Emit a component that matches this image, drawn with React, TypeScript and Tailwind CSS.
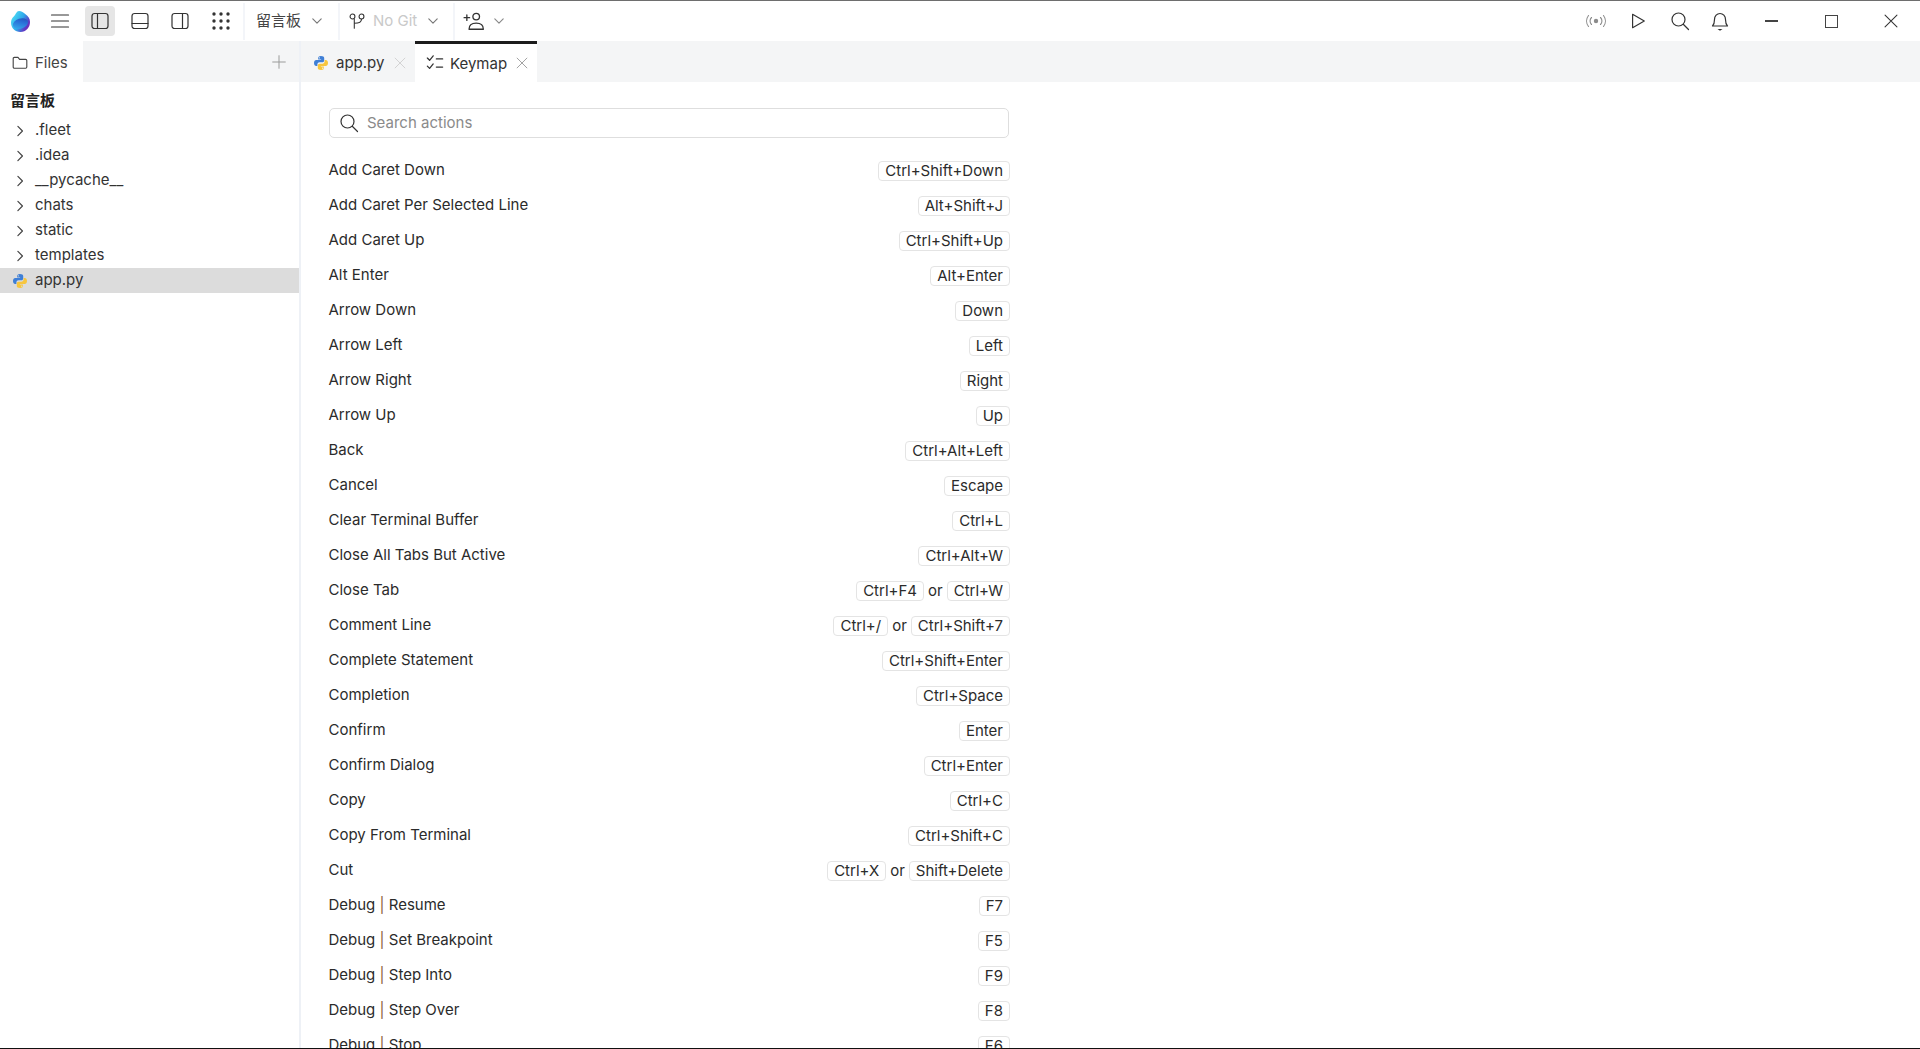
// App.tsx
import React from "react";

type Row = { name: string; keys: string[] };

const rows: Row[] = [
  { name: "Add Caret Down", keys: ["Ctrl+Shift+Down"] },
  { name: "Add Caret Per Selected Line", keys: ["Alt+Shift+J"] },
  { name: "Add Caret Up", keys: ["Ctrl+Shift+Up"] },
  { name: "Alt Enter", keys: ["Alt+Enter"] },
  { name: "Arrow Down", keys: ["Down"] },
  { name: "Arrow Left", keys: ["Left"] },
  { name: "Arrow Right", keys: ["Right"] },
  { name: "Arrow Up", keys: ["Up"] },
  { name: "Back", keys: ["Ctrl+Alt+Left"] },
  { name: "Cancel", keys: ["Escape"] },
  { name: "Clear Terminal Buffer", keys: ["Ctrl+L"] },
  { name: "Close All Tabs But Active", keys: ["Ctrl+Alt+W"] },
  { name: "Close Tab", keys: ["Ctrl+F4", "Ctrl+W"] },
  { name: "Comment Line", keys: ["Ctrl+/", "Ctrl+Shift+7"] },
  { name: "Complete Statement", keys: ["Ctrl+Shift+Enter"] },
  { name: "Completion", keys: ["Ctrl+Space"] },
  { name: "Confirm", keys: ["Enter"] },
  { name: "Confirm Dialog", keys: ["Ctrl+Enter"] },
  { name: "Copy", keys: ["Ctrl+C"] },
  { name: "Copy From Terminal", keys: ["Ctrl+Shift+C"] },
  { name: "Cut", keys: ["Ctrl+X", "Shift+Delete"] },
  { name: "Debug | Resume", keys: ["F7"] },
  { name: "Debug | Set Breakpoint", keys: ["F5"] },
  { name: "Debug | Step Into", keys: ["F9"] },
  { name: "Debug | Step Over", keys: ["F8"] },
  { name: "Debug | Stop", keys: ["F6"] },
];

const folders = [".fleet", ".idea", "__pycache__", "chats", "static", "templates"];

function Icon({ size = 20, className = "", children }: { size?: number; className?: string; children: React.ReactNode }) {
  return (
    <svg
      width={size}
      height={size}
      viewBox="0 0 20 20"
      fill="none"
      stroke="currentColor"
      strokeWidth="1.2"
      strokeLinecap="round"
      strokeLinejoin="round"
      className={"shrink-0 " + className}
    >
      {children}
    </svg>
  );
}

function Chevron({ className = "" }: { className?: string }) {
  return (
    <Icon size={14} className={className}>
      <path d="M4 7l6 6 6-6" strokeWidth="1.6" />
    </Icon>
  );
}

function ChevronRight() {
  return (
    <Icon size={14} className="text-[#444]">
      <path d="M7 3.5l6.5 6.5-6.5 6.5" strokeWidth="1.7" />
    </Icon>
  );
}

function CloseX({ className = "" }: { className?: string }) {
  return (
    <Icon size={14} className={className}>
      <path d="M3 3l14 14M17 3L3 17" strokeWidth="1.3" />
    </Icon>
  );
}

function Python() {
  return (
    <svg width="16" height="16" viewBox="0 0 16 16" className="shrink-0">
      <path
        fill="#3f7fd6"
        d="M7.9 1C5.6 1 5.2 2 5.2 3v1.4h2.9v.5H3.2C2 4.9 1 5.9 1 7.9s1 3 2.2 3h1.2V9.400c0-1.200 1-2.100 2.200-2.100h2.800c1 0 1.800-.8 1.800-1.800V3c0-1.100-1-2-3.300-2zM6.400 2.200a.6.6 0 110 1.200.6.6 0 010-1.200z"
      />
      <path
        fill="#f7c63e"
        d="M8.100 15c2.300 0 2.700-1 2.700-2v-1.400H7.900v-.5h4.900c1.200 0 2.200-1 2.200-3s-1-3-2.200-3h-1.200v1.500c0 1.200-1 2.100-2.200 2.100H6.600c-1 0-1.800.8-1.800 1.800V13c0 1.100 1 2 3.300 2zm1.500-1.200a.6.6 0 110-1.200.6.6 0 010 1.200z"
      />
    </svg>
  );
}

function Logo() {
  return (
    <svg width="21" height="23" viewBox="0 0 21 23" className="shrink-0">
      <defs>
        <linearGradient id="lgBody" x1="0" y1="0.2" x2="1" y2="0.8">
          <stop offset="0" stopColor="#4fe0f5" />
          <stop offset="0.5" stopColor="#2fa8ea" />
          <stop offset="0.8" stopColor="#5a3fc8" />
          <stop offset="1" stopColor="#7a22b0" />
        </linearGradient>
        <linearGradient id="lgInner" x1="0" y1="1" x2="1" y2="0">
          <stop offset="0" stopColor="#38b6ee" />
          <stop offset="0.6" stopColor="#2a6fd8" />
          <stop offset="1" stopColor="#2348b0" />
        </linearGradient>
      </defs>
      <path
        d="M9 1c2.500 0 4.500 1.800 6.500 3.200 2.600 1.800 4.500 4 4.500 7.800 0 5.500-4 10-9.500 10C5 22 1 18 1 12.500 1 9.800 2.200 8 4 6.200 5.800 4.500 6.500 1 9 1z"
        fill="url(#lgBody)"
      />
      <ellipse cx="10.500" cy="13.500" rx="7.800" ry="5" fill="url(#lgInner)" transform="rotate(-18 10.500 13.500)" />
    </svg>
  );
}

function Key({ label }: { label: string }) {
  return (
    <span className="inline-flex h-[20px] items-center rounded-[4px] border border-[#e4e4e4] px-[6px] text-[15px] leading-none text-[#2b2b2b]">
      {label}
    </span>
  );
}

function KeymapRow({ row }: { row: Row }) {
  const parts = row.name.split("|");
  return (
    <div className="flex h-[35px] shrink-0 items-center justify-between text-[15px] text-[#2b2b2b]">
      <span className="-mt-[1px] -ml-[0.5px] whitespace-pre">
        {parts[0]}
        {parts.length > 1 && <span className="text-[#8a6238]">|</span>}
        {parts[1]}
      </span>
      <span className="flex items-center gap-[4px]">
        {row.keys.map((k, i) => (
          <React.Fragment key={k}>
            {i > 0 && <span className="mt-[1px]">or</span>}
            <Key label={k} />
          </React.Fragment>
        ))}
      </span>
    </div>
  );
}

function ToolDivider() {
  return <div className="mx-0 h-[37px] w-[2px] shrink-0 bg-[#f3f5f9]" />;
}

export default function App() {
  return (
    <div
      className="flex h-[1049px] w-[1920px] flex-col overflow-hidden border-t border-b border-t-[#6e6e6e] border-b-[#111] bg-white text-[#2b2b2b]"
      style={{ fontFamily: 'Inter, "Noto Sans CJK SC", sans-serif' }}
    >
      {/* Top bar */}
      <div className="flex h-[40px] shrink-0 items-center">
        <div className="ml-[10px] flex w-[21px] justify-center">
          <Logo />
        </div>
        <Icon size={20} className="ml-[19px] text-[#333]">
          <path d="M1.500 4h17M1.500 10h17M1.500 16h17" />
        </Icon>
        <div className="ml-[15px] flex h-[30px] w-[30px] items-center justify-center rounded-[4px] bg-[#e6e6e6]">
          <Icon size={20} className="text-[#333]">
            <rect x="2" y="2.500" width="16" height="15" rx="2.500" />
            <path d="M7.500 2.500v15" />
          </Icon>
        </div>
        <Icon size={20} className="ml-[15px] text-[#333]">
          <rect x="2" y="2.500" width="16" height="15" rx="2.500" />
          <path d="M2 12.500h16" />
        </Icon>
        <Icon size={20} className="ml-[20px] text-[#333]">
          <rect x="2" y="2.500" width="16" height="15" rx="2.500" />
          <path d="M12.500 2.500v15" />
        </Icon>
        <svg width="20" height="20" viewBox="0 0 20 20" className="ml-[21px] shrink-0 fill-[#333]">
          {[3, 10, 17].map((y) =>
            [3, 10, 17].map((x) => <circle key={x + "-" + y} cx={x} cy={y} r="1.700" />)
          )}
        </svg>
        <div className="ml-[12px]">
          <ToolDivider />
        </div>
        <span className="ml-[11px] text-[15px] text-[#444]">留言板</span>
        <Chevron className="ml-[9px] text-[#777]" />
        <div className="ml-[14px]">
          <ToolDivider />
        </div>
        <Icon size={18} className="ml-[8px] text-[#333]">
          <circle cx="5" cy="5" r="2.700" />
          <circle cx="15" cy="5" r="2.700" />
          <path d="M7 18V8M15 8c0 3-2 4.500-8 4.500" />
        </Icon>
        <span className="ml-[7px] text-[15px] text-[#c9c9c9]">No Git</span>
        <Chevron className="ml-[9px] text-[#777]" />
        <div className="ml-[13px]">
          <ToolDivider />
        </div>
        <Icon size={22} className="ml-[8px] text-[#333]">
          <circle cx="12" cy="6" r="3" />
          <path d="M5.500 17.500c0-3.500 2.500-5.500 6.500-5.500s6.500 2 6.500 5.500zM1 7h5M3.500 4.500v5" />
        </Icon>
        <Chevron className="ml-[7px] text-[#888]" />

        <div className="ml-auto flex items-center">
          <svg width="22" height="14" viewBox="0 0 22 14" fill="none" stroke="#8b8b8b" strokeWidth="1.100" strokeLinecap="round" className="shrink-0">
            <circle cx="11" cy="7" r="2.200" fill="#8b8b8b" stroke="none" />
            <path d="M6.500 3.500a5 5 0 000 7M15.500 3.500a5 5 0 010 7M3.500 1.500a9 9 0 000 11M18.500 1.500a9 9 0 010 11" />
          </svg>
          <Icon size={18} className="ml-[22px] text-[#333]">
            <path d="M4 2.500v15L17 10z" strokeWidth="1.300" />
          </Icon>
          <Icon size={20} className="ml-[23px] text-[#333]">
            <circle cx="8.500" cy="8.500" r="6.500" />
            <path d="M13.500 13.500l5 5" />
          </Icon>
          <svg width="18" height="20" viewBox="0 0 18 20" fill="none" stroke="#333" strokeWidth="1.200" strokeLinejoin="round" className="ml-[21px] shrink-0">
            <path d="M1.500 15c1.500-1.500 2-3 2-6.500C3.500 5 6 2.500 9 2.500s5.500 2.500 5.500 6c0 3.500.5 5 2 6.500z" />
            <path d="M6.500 18h5L9 19.800z" fill="#333" stroke="none" />
          </svg>
          <div className="ml-[36px] h-[1.500px] w-[13px] bg-[#444]" />
          <div className="ml-[47px] h-[13px] w-[13px] border-[1.500px] border-[#444]" />
          <Icon size={14} className="ml-[46px] mr-[22px] text-[#333]">
            <path d="M1.500 1.500l17 17M18.500 1.500l-17 17" strokeWidth="1.500" />
          </Icon>
        </div>
      </div>

      <div className="flex min-h-0 flex-1">
        {/* Sidebar */}
        <aside className="flex w-[299px] shrink-0 flex-col">
          <div className="flex h-[41px] shrink-0 bg-[#f4f5f6]">
            <div className="flex w-[83px] items-center bg-white pt-[2px] pl-[12px] text-[15px] text-[#444]">
              <Icon size={16}>
                <path d="M1.500 4.500a1.500 1.500 0 011.500-1.500h4.500l2 2.500h7.500a1.500 1.500 0 011.500 1.500v8a1.500 1.500 0 01-1.500 1.500H3a1.500 1.500 0 01-1.500-1.500z" strokeWidth="1.400" />
              </Icon>
              <span className="ml-[7px] mt-[2px]">Files</span>
            </div>
            <div className="ml-auto flex items-center pt-[1px] pr-[13px] text-[#999]">
              <Icon size={14}>
                <path d="M10 1v18M1 10h18" strokeWidth="1.400" />
              </Icon>
            </div>
          </div>
          <div className="mt-[6px] flex h-[26px] items-center pl-[10px] text-[15px] font-bold text-[#222]">留言板</div>
          <div className="mt-[4px] flex flex-col">
            {folders.map((f) => (
              <div key={f} className="flex h-[25px] items-center pl-[13px] text-[15px] text-[#333]">
                <ChevronRight />
                <span className="ml-[8px]">{f}</span>
              </div>
            ))}
            <div className="flex h-[25px] items-center bg-[#dcdcdc] pl-[12px] text-[15px] text-[#333]">
              <Python />
              <span className="ml-[7px]">app.py</span>
            </div>
          </div>
        </aside>
        <div className="w-[2px] shrink-0 bg-[#eef1f6]" />

        {/* Main */}
        <main className="flex min-w-0 flex-1 flex-col">
          <div className="flex h-[41px] shrink-0 bg-[#f4f5f6]">
            <div className="flex w-[114px] items-center pt-[2px] pl-[12px] text-[15px] text-[#333]">
              <Python />
              <span className="ml-[7px] mt-[2px]">app.py</span>
              <CloseX className="ml-[9px] text-[#cfcfcf]" />
            </div>
            <div className="flex w-[122px] items-center border-t-[3px] border-[#1c1c1c] bg-white pl-[11px] text-[15px] text-[#333]">
              <Icon size={18} className="text-[#333]">
                <path d="M1.500 4.500l2.500 2.500 4-5M1.500 13.500l2.500 2.500 4-5M11.500 5.500h7M11.500 14.500h7" strokeWidth="1.400" />
              </Icon>
              <span className="ml-[6px] mt-[2px]">Keymap</span>
              <CloseX className="ml-[8px] text-[#999]" />
            </div>
          </div>

          <div className="flex min-h-0 flex-1 flex-col overflow-hidden pt-[26px] pl-[28px]">
            <div className="flex h-[30px] w-[680px] shrink-0 items-center rounded-[5px] border border-[#dedede] pl-[9px] text-[15px] text-[#8a8a8a]">
              <Icon size={20} className="text-[#333]">
                <circle cx="8.500" cy="8.500" r="6.500" />
                <path d="M13.500 13.500l5 5" />
              </Icon>
              <span className="ml-[8px]">Search actions</span>
            </div>
            <div className="mt-[15px] flex w-[681px] flex-col">
              {rows.map((r) => (
                <KeymapRow key={r.name} row={r} />
              ))}
            </div>
          </div>
        </main>
      </div>
    </div>
  );
}
